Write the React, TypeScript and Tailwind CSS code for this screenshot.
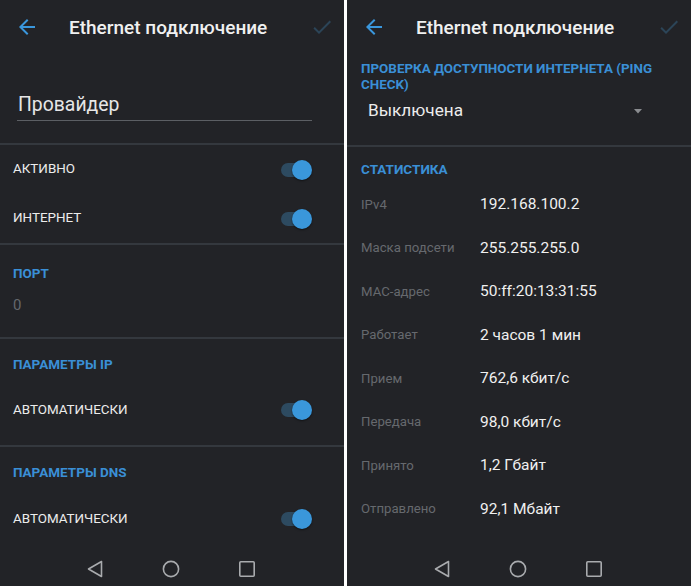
import React from 'react';

const font = "font-['Roboto','Liberation_Sans',sans-serif]";

const BackArrow = () => (
  <svg width="24" height="24" viewBox="0 0 24 24" className="shrink-0">
    <path fill="#3a97dd" d="M20 11H7.83l5.59-5.59L12 4l-8 8 8 8 1.41-1.41L7.83 13H20v-2z" />
  </svg>
);

const CheckMark = () => (
  <svg width="24" height="24" viewBox="0 0 24 24" className="shrink-0">
    <path fill="#2c4558" d="M9 16.17L4.83 12l-1.42 1.41L9 19 21 7l-1.41-1.41z" />
  </svg>
);

const Header = () => (
  <div className="h-[54px] flex items-center pl-[15px] pr-[10px]">
    <BackArrow />
    <span className="ml-[30px] text-[19px] font-medium text-[#f0f0f0] leading-none">
      Ethernet подключение
    </span>
    <div className="ml-auto">
      <CheckMark />
    </div>
  </div>
);

const Divider = () => <div className="h-[2px] bg-[#34383e] shrink-0" />;

const Toggle = () => (
  <div className="relative w-[31px] h-[20px] shrink-0">
    <div className="absolute left-0 top-[3px] w-[25px] h-[14px] rounded-full bg-[#2d4a60]" />
    <div className="absolute right-0 top-0 w-[20px] h-[20px] rounded-full bg-[#3a97db] shadow-[0_1px_2px_rgba(0,0,0,0.5)]" />
  </div>
);

const ToggleRow = ({ label, h }: { label: string; h: string }) => (
  <div className={`${h} flex items-center pl-[13px] pr-[32px]`}>
    <span className="text-[13.4px] text-[#ececec]">{label}</span>
    <div className="ml-auto">
      <Toggle />
    </div>
  </div>
);

const SectionTitle = ({ children }: { children: React.ReactNode }) => (
  <div className="text-[13.5px] font-bold leading-[20px] text-[#3a8fd6]">{children}</div>
);

const NavBar = () => (
  <div className="h-[38px] flex items-start pt-[9px] pl-[83px] gap-[52px]">
    <svg width="24" height="24" viewBox="0 0 24 24">
      <path d="M5.5 12L18.5 4.5V19.5Z" fill="none" stroke="#a9abae" strokeWidth="1.6" strokeLinejoin="round" />
    </svg>
    <svg width="24" height="24" viewBox="0 0 24 24">
      <circle cx="12" cy="12" r="7.6" fill="none" stroke="#a9abae" strokeWidth="1.6" />
    </svg>
    <svg width="24" height="24" viewBox="0 0 24 24">
      <rect x="4.8" y="4.8" width="14.4" height="14.4" rx="1" fill="none" stroke="#a9abae" strokeWidth="1.6" />
    </svg>
  </div>
);

const LeftPanel = () => (
  <div className="w-[344px] h-[586px] bg-[#222327] flex flex-col shrink-0">
    <Header />
    <div className="h-[89px] pt-[37px] pl-[17px]">
      <div className="w-[295px] h-[30px] border-b border-[#5c5f64] pl-px text-[19.4px] leading-[28px] text-[#e6e6e6]">
        Провайдер
      </div>
    </div>
    <Divider />
    <ToggleRow label="АКТИВНО" h="h-[49px]" />
    <ToggleRow label="ИНТЕРНЕТ" h="h-[49px]" />
    <Divider />
    <div className="h-[92px] pt-[18px] px-[13px]">
      <SectionTitle>ПОРТ</SectionTitle>
      <div className="mt-[12px] leading-[20px] text-[15px] text-[#65686d]">0</div>
    </div>
    <Divider />
    <div className="h-[106px] pt-[15px]">
      <div className="px-[13px]">
        <SectionTitle>ПАРАМЕТРЫ IP</SectionTitle>
      </div>
      <div className="mt-[11px]">
        <ToggleRow label="АВТОМАТИЧЕСКИ" h="h-[50px]" />
      </div>
    </div>
    <Divider />
    <div className="h-[101px] pt-[15px]">
      <div className="px-[13px]">
        <SectionTitle>ПАРАМЕТРЫ DNS</SectionTitle>
      </div>
      <div className="mt-[12px]">
        <ToggleRow label="АВТОМАТИЧЕСКИ" h="h-[50px]" />
      </div>
    </div>
    <NavBar />
  </div>
);

const stats = [
  ['IPv4', '192.168.100.2'],
  ['Маска подсети', '255.255.255.0'],
  ['MAC-адрес', '50:ff:20:13:31:55'],
  ['Работает', '2 часов 1 мин'],
  ['Прием', '762,6 кбит/с'],
  ['Передача', '98,0 кбит/с'],
  ['Принято', '1,2 Гбайт'],
  ['Отправлено', '92,1 Мбайт'],
];

const RightPanel = () => (
  <div className="w-[344px] h-[586px] bg-[#222327] flex flex-col shrink-0">
    <Header />
    <div className="h-[91px] pt-[7px] px-[14px]">
      <div className="text-[13.4px] font-bold leading-[16px] text-[#3a8fd6]">
        ПРОВЕРКА ДОСТУПНОСТИ ИНТЕРНЕТА (PING CHECK)
      </div>
      <div className="mt-[5px] h-[26px] flex items-center pl-[7px] pr-[35px]">
        <span className="text-[17.2px] text-[#ececec]">Выключена</span>
        <svg width="8" height="5" viewBox="0 0 8 5" className="ml-auto">
          <path d="M0 0H8L4 4.5Z" fill="#8a8c90" />
        </svg>
      </div>
    </div>
    <Divider />
    <div className="pt-[12px] px-[14px]">
      <SectionTitle>СТАТИСТИКА</SectionTitle>
      <div className="mt-[4px] flex flex-col">
        {stats.map(([label, value]) => (
          <div key={label} className="h-[43.5px] flex items-center">
            <span className="w-[119px] text-[13.2px] text-[#66696e]">{label}</span>
            <span className="text-[15.5px] text-[#f0f0f0]">{value}</span>
          </div>
        ))}
      </div>
    </div>
    <div className="mt-auto">
      <NavBar />
    </div>
  </div>
);

export default function App() {
  return (
    <div className={`${font} w-[691px] h-[586px] flex bg-white gap-[3px] overflow-hidden`}>
      <LeftPanel />
      <RightPanel />
    </div>
  );
}
